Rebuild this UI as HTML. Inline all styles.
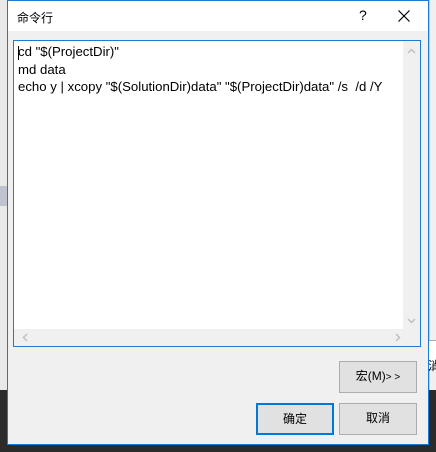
<!DOCTYPE html>
<html><head><meta charset="utf-8"><style>
*{margin:0;padding:0;box-sizing:border-box}
body{width:436px;height:452px;overflow:hidden;background:#e9e9e9;position:relative;font-family:"Liberation Sans","Noto Sans CJK SC",sans-serif;font-size:12px;color:#000}
.abs{position:absolute}
.btn{position:absolute;background:#e1e1e1;border:1px solid #adadad;text-align:center;line-height:29px;font-size:12px}
</style></head><body>
<div class="abs" style="left:0;top:186px;width:7px;height:20px;background:#bfc3cf"></div>
<div class="abs" style="left:0;top:390px;width:436px;height:62px;background:#2b2b2b"></div>
<div class="abs" style="left:429px;top:0;width:7px;height:390px;background:#f0f0f0;border-left:1px solid #ccc"></div>
<div class="abs" style="left:429px;top:340px;width:7px;height:30px;background:#fff;border-top:1px solid #aaa;border-bottom:1px solid #aaa"></div>
<div class="abs" style="left:428px;top:357px;font-size:12px;overflow:hidden;width:8px">消</div>
<div class="abs" style="left:7px;top:0;width:422px;height:445px;background:#f0f0f0;border:1px solid #1a7ad4">
  <div class="abs" style="left:0;top:0;width:420px;height:30px;background:#fff"></div>
  <div class="abs" style="left:9px;top:8px;font-size:12px">命令行</div>
  <div class="abs" style="left:351px;top:6px;font-size:14px">?</div>
  <svg class="abs" style="left:390px;top:9px" width="12" height="12"><path d="M0.5 0.5L11.5 11.5M11.5 0.5L0.5 11.5" stroke="#000" stroke-width="1.2"/></svg>
  <div class="abs" style="left:5px;top:39px;width:408px;height:307px;border:1px solid #1a7ad4;background:#fff">
    <div class="abs" style="left:0;top:0;width:389px;height:288px;background:#fff;line-height:17.5px;padding:2px 0 0 4px;font-size:13.2px;white-space:pre">cd "$(ProjectDir)"
md data
echo y | xcopy "$(SolutionDir)data" "$(ProjectDir)data" /s  /d /Y</div>
    <div class="abs" style="left:4px;top:5px;width:1px;height:14px;background:#000"></div>
    <div class="abs" style="left:389px;top:0;width:17px;height:288px;background:#f0f0f0"></div>
    <div class="abs" style="left:0;top:288px;width:406px;height:17px;background:#f0f0f0"></div>
    <svg class="abs" style="left:393px;top:7px" width="9" height="6"><path d="M1 5L4.5 1.5L8 5" stroke="#c0c0c0" fill="none" stroke-width="1.5"/></svg>
    <svg class="abs" style="left:393px;top:277px" width="9" height="6"><path d="M1 1L4.5 4.5L8 1" stroke="#c0c0c0" fill="none" stroke-width="1.5"/></svg>
    <svg class="abs" style="left:8px;top:292px" width="6" height="9"><path d="M5 1L1.5 4.5L5 8" stroke="#c0c0c0" fill="none" stroke-width="1.5"/></svg>
    <svg class="abs" style="left:381px;top:292px" width="6" height="9"><path d="M1 1L4.5 4.5L1 8" stroke="#c0c0c0" fill="none" stroke-width="1.5"/></svg>
  </div>
  <div class="btn" style="left:331px;top:360px;width:78px;height:32px">宏(M)<span style="font-size:10px">&gt; &gt;</span></div>
  <div class="btn" style="left:248px;top:402px;width:78px;height:32px;border:2px solid #0078d7;line-height:28px">确定</div>
  <div class="btn" style="left:331px;top:402px;width:78px;height:32px">取消</div>
</div>
</body></html>
